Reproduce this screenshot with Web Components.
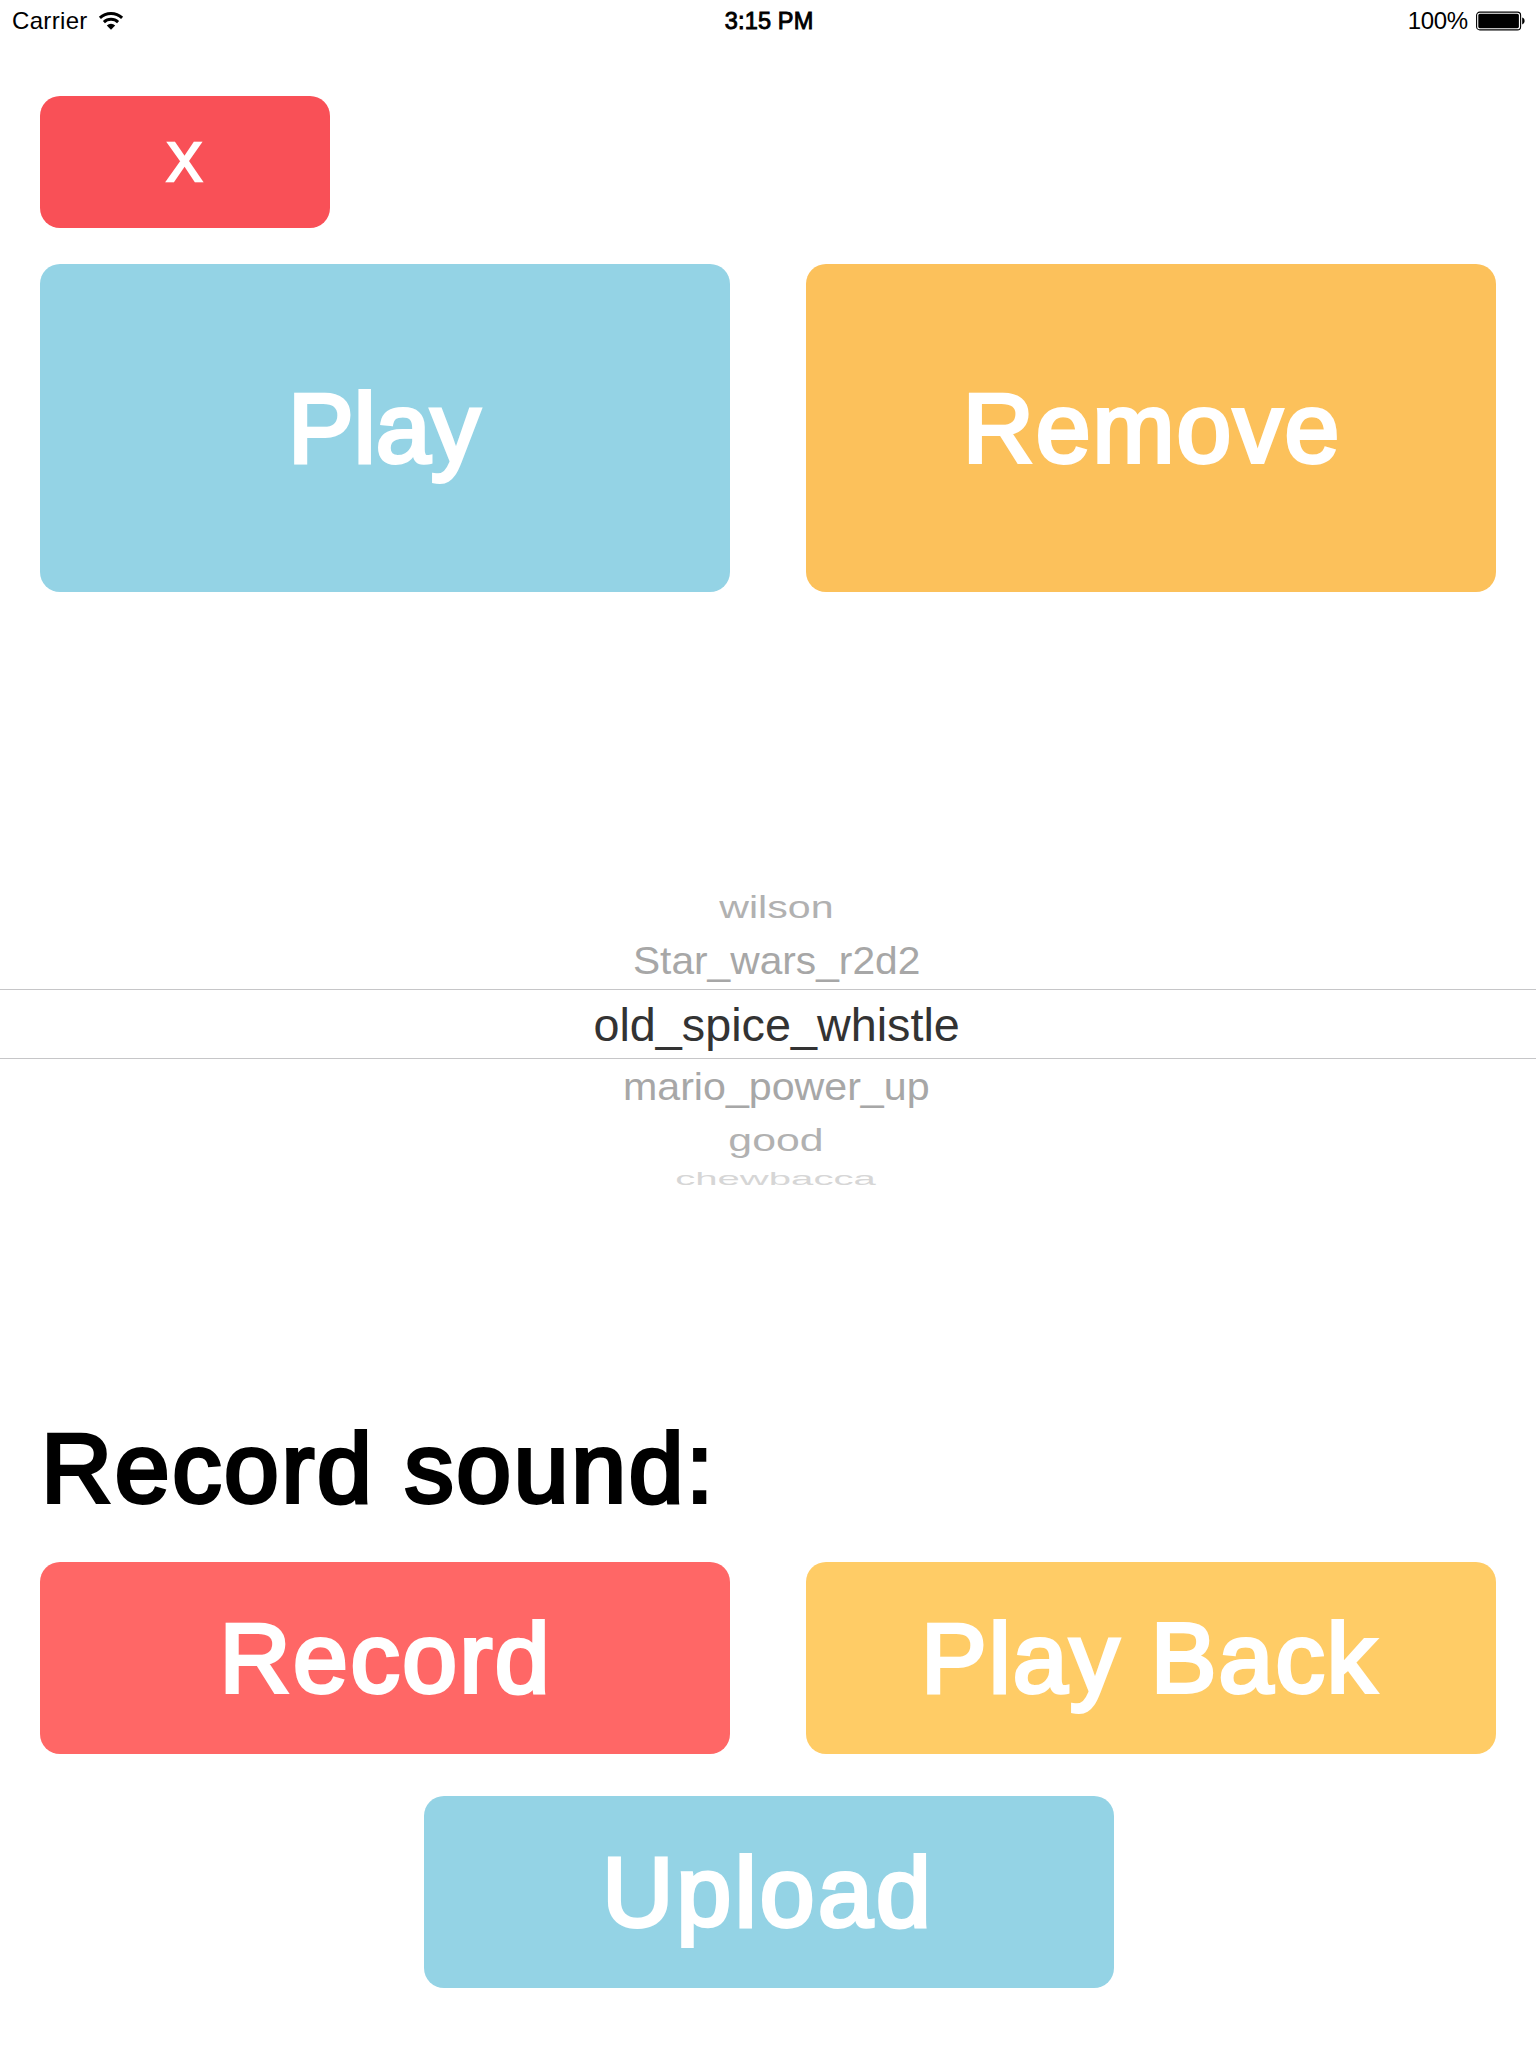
<!DOCTYPE html>
<html lang="en">
<head>
<meta charset="utf-8">
<title>Sounds</title>
<style>
  html, body { margin: 0; background: #fff; }
  body { width: 1536px; height: 2048px; overflow: hidden; font-family: "Liberation Sans", Arial, sans-serif; color: #000; }
</style>
</head>
<body>
<sound-screen></sound-screen>
<script>
  const FAMILY = '"Liberation Sans", Arial, sans-serif';
  const pen = document.createElement('canvas').getContext('2d');

  // A line of text set to a given ink width, by tracking or by horizontal stretch.
  class FitText extends HTMLElement {
    connectedCallback() {
      const size = +this.getAttribute('size');
      const weight = +(this.getAttribute('stroke') || 0);
      const target = +this.getAttribute('ink');
      const text = this.textContent;
      pen.font = size + 'px ' + FAMILY;
      const m = pen.measureText(text);
      const ink = m.actualBoundingBoxLeft + m.actualBoundingBoxRight + weight;
      let fit = '';
      if (this.hasAttribute('stretch')) fit = `transform: scaleX(${target / ink});`;
      else if (text.length > 1) {
        const ls = (target - ink) / (text.length - 1);
        fit = `letter-spacing: ${ls}px; margin-right: ${-ls}px;`;
      }
      this.attachShadow({ mode: 'open' }).innerHTML = `<style>
          :host { display: flex; flex: none; font-size: ${size}px; line-height: 1; }
          span { display: block; white-space: nowrap; -webkit-text-stroke: ${weight}px currentColor; ${fit} }
        </style><span><slot></slot></span>`;
    }
  }

  class PadButton extends HTMLElement {
    connectedCallback() {
      this.attachShadow({ mode: 'open' }).innerHTML = `
        <style>
          :host { display: flex; flex: none; box-sizing: border-box; align-items: center; justify-content: center;
            width: 690px; height: var(--h, 192px); padding: 0 var(--pr, 0px) 0 0; border-radius: 20px; color: #fff; background: var(--fill); }
        </style><slot></slot>`;
    }
  }

  class StatusBar extends HTMLElement {
    connectedCallback() {
      this.attachShadow({ mode: 'open' }).innerHTML = `
        <style>
          :host { display: grid; grid-template-columns: 1fr auto 1fr; align-items: center; height: 41px; padding: 0 10px 0 12px; }
          div { display: flex; align-items: center; }
          .l { gap: 11px; } .r { justify-content: flex-end; gap: 8px; }
          .time { padding-top: 2px; }
          svg { display: block; }
        </style>
        <div class="l"><fit-text size="24" ink="74.3">Carrier</fit-text>
          <svg width="26" height="20" viewBox="0 0 26 20">
            <g fill="none" stroke="#000" stroke-width="3">
              <path d="M1.9 6.8 A16.2 16.2 0 0 1 24.1 6.8"/><path d="M5.9 11.1 A10.4 10.4 0 0 1 20.1 11.1"/>
            </g>
            <path d="M8.8 14.5 A6 6 0 0 1 17.2 14.5 L13 18.8 Z"/>
          </svg></div>
        <fit-text class="time" size="23.5" stroke="0.9" ink="87.8">3:15 PM</fit-text>
        <div class="r"><fit-text size="24" ink="59">100%</fit-text>
          <svg width="50" height="20" viewBox="0 0 50 20">
            <rect x=".6" y="1.1" width="44" height="17.8" rx="3.2" fill="none" stroke="#000" stroke-width="1.1"/>
            <rect x="2.3" y="2.8" width="40.6" height="14.4" rx="1.6"/>
            <path d="M46.2 6.6 C49.4 7.2 49.4 12.8 46.2 13.4 Z"/>
          </svg></div>`;
    }
  }

  class SoundPicker extends HTMLElement {
    connectedCallback() {
      this.attachShadow({ mode: 'open' }).innerHTML = `
        <style>
          :host { display: flex; flex-direction: column; }
          div { display: flex; flex: none; box-sizing: border-box; align-items: center; justify-content: center; padding-left: 16.5px; color: #a7a7a7; }
          .sel { height: 70px; padding-top: 2px; border-top: 1px solid #c6c6c8; border-bottom: 1px solid #c6c6c8; color: #333; }
        </style>
        <div style="height:51px;padding-top:1px;color:#b1b1b1"><fit-text stretch size="30.5" ink="113">wilson</fit-text></div>
        <div style="height:57px"><fit-text stretch size="39" ink="284.6">Star_wars_r2d2</fit-text></div>
        <div class="sel"><fit-text stretch size="46.6" ink="363.5">old_spice_whistle</fit-text></div>
        <div style="height:55px"><fit-text stretch size="39" ink="303.7">mario_power_up</fit-text></div>
        <div style="height:53px;color:#b1b1b1"><fit-text stretch size="30.5" ink="91">good</fit-text></div>
        <div style="height:25px;color:#d6d6d6;padding-left:15px"><fit-text stretch size="18.6" ink="202">chewbacca</fit-text></div>`;
    }
  }

  class SoundScreen extends HTMLElement {
    connectedCallback() {
      this.attachShadow({ mode: 'open' }).innerHTML = `
        <style>
          :host { display: flex; flex-direction: column; width: 1536px; height: 2048px; font-family: ${FAMILY}; }
          status-bar { flex: none; }
          .close { width: 290px; margin: 55px 0 0 40px; }
          .row { display: flex; justify-content: space-between; padding: 0 40px; }
          .actions { margin-top: 36px; }
          sound-picker { margin-top: 289px; height: 311px; flex: none; }
          h1 { display: flex; align-items: center; height: 114px; margin: 219px 0 37px; padding-left: 41px; font: inherit; }
          .upload { margin: 42px 0 0 424px; }
        </style>
        <status-bar></status-bar>
        <pad-button class="close" style="--h:132px;--pr:1px;--fill:#f95057"><fit-text stretch size="55" stroke="2.6" ink="36.6">X</fit-text></pad-button>
        <div class="row actions">
          <pad-button style="--h:328px;--pr:2px;--fill:#94d3e5"><fit-text size="98.5" stroke="3.8" ink="188.7">Play</fit-text></pad-button>
          <pad-button style="--h:328px;--fill:#fcc15b"><fit-text size="98.5" stroke="3.8" ink="368.5">Remove</fit-text></pad-button>
        </div>
        <sound-picker></sound-picker>
        <h1><fit-text size="98.5" stroke="3.8" ink="659.9">Record sound:</fit-text></h1>
        <div class="row">
          <pad-button style="--pr:1px;--fill:#ff6766"><fit-text size="98.5" stroke="3.8" ink="320">Record</fit-text></pad-button>
          <pad-button style="--pr:5px;--fill:#ffcc66"><fit-text size="98.5" stroke="3.8" ink="451.7">Play Back</fit-text></pad-button>
        </div>
        <pad-button class="upload" style="--pr:5px;--fill:#94d3e5"><fit-text size="98.5" stroke="3.8" ink="319.6">Upload</fit-text></pad-button>`;
    }
  }

  customElements.define('fit-text', FitText);
  customElements.define('pad-button', PadButton);
  customElements.define('status-bar', StatusBar);
  customElements.define('sound-picker', SoundPicker);
  customElements.define('sound-screen', SoundScreen);
</script>
</body>
</html>
